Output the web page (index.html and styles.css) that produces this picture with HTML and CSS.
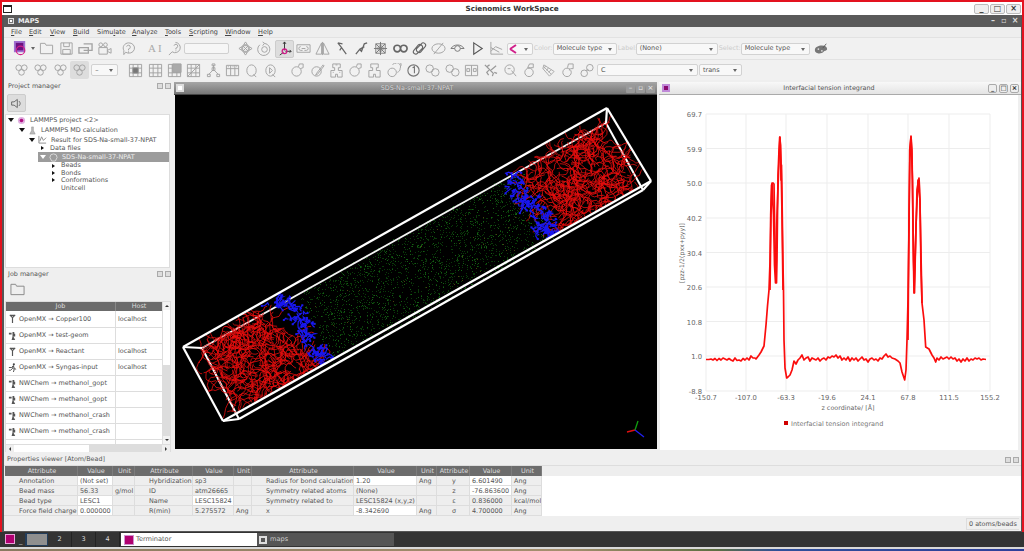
FILE: index.html
```html
<!DOCTYPE html>
<html lang="en">
<head>
<meta charset="utf-8">
<title>Scienomics WorkSpace</title>
<link rel="stylesheet" href="styles.css">
</head>
<body>
<svg class="defs" aria-hidden="true">
  <symbol id="ant" viewBox="0 0 10 10"><path d="M2 1l3 3 3-3M5 3v7M3 1.500h4" fill="none" stroke="#555" stroke-width="1.300"/></symbol>
  <symbol id="stop" viewBox="0 0 10 10"><path d="M1 2h3v2H1zM5 1h2v2H5zM5 3h3v3H6l2 4H4l1-4z" fill="#555"/></symbol>
  <symbol id="run" viewBox="0 0 10 10"><circle cx="6.500" cy="1.500" r="1.200" fill="#444"/><path d="M1 5h3l2-2 1 3 2 1M6 3L5 6l2 1-1 3M5 6L3 8 1 8" fill="none" stroke="#444"/></symbol>
  <symbol id="mol" viewBox="0 0 16 16"><path d="M2 5a3 3 0 1 1 6 0 3 3 0 1 1-6 0zM8 5a3 3 0 1 1 6 0 3 3 0 1 1-6 0zM5 10a3 3 0 1 1 6 0 3 3 0 1 1-6 0z"/></symbol>
  <symbol id="grid" viewBox="0 0 16 16"><path d="M1.500 1.500h13v13h-13zM1.500 5.500h13M1.500 10.500h13M5.500 1.500v13M10.500 1.500v13"/></symbol>
  <symbol id="ring" viewBox="0 0 16 16"><path d="M2 9a5 5 0 1 1 10 0 5 5 0 1 1-10 0zM9 4l1-3h4v4l-3 1"/></symbol>
  <symbol id="rings" viewBox="0 0 16 16"><path d="M1 6a4 4 0 1 1 8 0 4 4 0 1 1-8 0zM7 10a4 4 0 1 1 8 0 4 4 0 1 1-8 0z"/></symbol>
  <symbol id="tree" viewBox="0 0 16 16"><path d="M8 2v5M8 7l-5 5M8 7l5 5M1.500 12h3v2.500h-3zM6.500 5h3v3h-3zM11.500 12h3v2.500h-3zM6.500 1h3v2h-3z"/></symbol>
</svg>
<div class="desktop">
  <header class="wm-title">
    <span class="wm-icon"></span>
    <span class="wm-name">Scienomics WorkSpace</span>
    <span class="wm-btns"><span class="wm-b">_</span><span class="wm-b">□</span><span class="wm-b">×</span></span>
  </header>
  <div class="app">
    <div class="app-head">
      <span class="app-icon"></span><span class="app-name">MAPS</span>
      <span class="app-btns"><span>–</span><span>▫</span><span>×</span></span>
    </div>
    <nav class="menu">
      <span class="m m1"><u>F</u>ile</span><span class="m m2"><u>E</u>dit</span><span class="m m3"><u>V</u>iew</span><span class="m m4"><u>B</u>uild</span><span class="m m5">Simu<u>l</u>ate</span><span class="m m6"><u>A</u>nalyze</span><span class="m m7"><u>T</u>ools</span><span class="m m8"><u>S</u>cripting</span><span class="m m9"><u>W</u>indow</span><span class="m m10"><u>H</u>elp</span>
    </nav>
    <div class="tb tb1">
      <span class="ti"><svg viewBox="0 0 16 16"><rect x="2" y="1" width="10" height="10" fill="#6a1080" stroke="#a070d0" stroke-width="2"/><circle cx="8" cy="10" r="4.500" stroke="#d0208a" stroke-width="1.300"/></svg></span>
      <span class="caret-only"></span>
      <span class="ti"><svg viewBox="0 0 16 16"><path d="M1.500 13.500v-11h5l1 2h7v9z"/></svg></span>
      <span class="ti"><svg viewBox="0 0 16 16"><path d="M2 2h12v12H2zM5 2v4h6V2M4 9h8v5H4z"/></svg></span>
      <span class="ti"><svg viewBox="0 0 16 16"><path d="M6 3h9v7H6M1 7h10v6H1z" stroke-width="1.400"/></svg></span>
      <span class="ti"><svg viewBox="0 0 16 16"><path d="M2 7h9v7H2zM11 10l4-2v5l-4-2M2 4a2 2 0 1 1 4 0 2 2 0 1 1-4 0zM7 4a2 2 0 1 1 4 0 2 2 0 1 1-4 0z"/></svg></span>
      <span class="ti m-sep"><svg viewBox="0 0 16 16"><path d="M8 2a6 5.500 0 1 1-3 10l-2 2.500V10A6 5.500 0 0 1 8 2zM6 6a2 2 0 1 1 2 2.500V10M8 11v1.500"/></svg></span>
      <span class="ti m-sep2 ti-txt">A<span class="cursor">I</span></span>
      <span class="ti"><svg viewBox="0 0 16 16"><path d="M9 1.500a5.500 5.500 0 1 1-3.500 10L2 15M7.500 5a2 2 0 1 1 2 2.500V9M9.500 10v1"/></svg></span>
      <span class="inp"></span>
      <span class="ti m-sep2"><svg viewBox="0 0 16 16"><path d="M8 1l2 3H6zM8 15l-2-3h4zM1 8l3-2v4zM15 8l-3 2V6zM5 5h6v6H5zM5 5l6 6M11 5l-6 6"/></svg></span>
      <span class="ti"><svg viewBox="0 0 16 16"><path d="M3 4a6.500 6.500 0 1 0 5-1.500L6 1M8 2.500L6 5M5 9a3 3 0 1 1 6 0 3 3 0 1 1-6 0z"/></svg></span>
      <span class="ti ti-on"><svg viewBox="0 0 16 16"><path d="M8 10V1M6.500 3L8 1l1.500 2M9 11h6M13.500 9.500L15 11l-1.500 1.500M7 12l-4 3" stroke="#333"/><circle cx="8" cy="11" r="2.500" stroke="#d0208a" stroke-width="1.400"/></svg></span>
      <span class="ti"><svg viewBox="0 0 16 16"><path d="M1 4h14v8H1zM5 6a2 2 0 1 0 0 4h2M11 6a2 2 0 1 1 0 4H9M6 8h4"/></svg></span>
      <span class="ti"><svg viewBox="0 0 16 16"><path d="M7 2L1 14h6zM9 2l6 12H9zM8 1v14"/></svg></span>
      <span class="ti"><svg viewBox="0 0 16 16"><path d="M3 2l4 5-2 3M7 7l5 7M3 2l5 1" stroke="#666" stroke-width="1.300"/></svg></span>
      <span class="ti"><svg viewBox="0 0 16 16"><path d="M2 14l4-5 2 2 3-8 3-1M6 9l5-3" stroke="#666" stroke-width="1.400"/></svg></span>
      <span class="ti"><svg viewBox="0 0 16 16"><path d="M3 3h10v10H3zM8 1v14M1 8h14M3 3l10 10M13 3L3 13M5 8a3 3 0 1 1 6 0 3 3 0 1 1-6 0z" stroke="#777"/></svg></span>
      <span class="ti"><svg viewBox="0 0 16 16"><path d="M1 8a3.500 3.500 0 1 1 7 0 3.500 3.500 0 1 1-7 0zM8 8a3.500 3.500 0 1 1 7 0 3.500 3.500 0 1 1-7 0z" stroke="#666" stroke-width="1.800"/></svg></span>
      <span class="ti"><svg viewBox="0 0 16 16"><path d="M2 10l5-6a3 3 0 0 1 4 4l-5 5a2.500 2.500 0 0 1-4-3zM14 6l-5 6a3 3 0 0 1-4-4l5-5a2.500 2.500 0 0 1 4 3z" stroke="#666" stroke-width="1.200"/></svg></span>
      <span class="ti"><svg viewBox="0 0 16 16"><path d="M1 8a7 5 0 1 1 14 0 7 5 0 1 1-14 0zM3 14L13 2"/></svg></span>
      <span class="ti"><svg viewBox="0 0 16 16"><path d="M1 8h4M11 8h4M5 8a3 3 0 1 1 6 0 3 3 0 1 1-6 0zM1 8c3-5 11-5 14 0" stroke="#777"/></svg></span>
      <span class="ti"><svg viewBox="0 0 16 16"><path d="M4 2l9 6-9 6z" stroke="#555" stroke-width="1.200"/></svg></span>
      <span class="ti"><svg viewBox="0 0 16 16"><path d="M2 1v13h13M2 11l5-5 7 3M2 7l9 5"/></svg></span>
      <span class="cb cb-mol"><svg class="molmini" viewBox="0 0 10 10"><path d="M2 5L8 1M2 5l6 4" stroke="#d0208a" stroke-width="2" fill="none"/></svg></span>
      <span class="lbl l-color">Color:</span><span class="cb cb-a">Molecule type</span>
      <span class="lbl l-label">Label:</span><span class="cb cb-b">(None)</span>
      <span class="lbl l-select">Select:</span><span class="cb cb-c">Molecule type</span>
      <span class="palette"><svg viewBox="0 0 16 12"><path d="M1 7c0-3 4-5 8-5s6 2 6 4-3 2-4 3-3 2-5 2-5-1-5-4z" fill="#777"/><path d="M10 5l4-5" stroke="#555"/><circle cx="5" cy="6" r="1" fill="#ddd"/><circle cx="9" cy="8" r="1" fill="#ddd"/></svg></span>
    </div>
    <div class="tb tb2">
      <span class="ti"><svg><use href="#mol"/></svg></span>
      <span class="ti"><svg><use href="#mol"/></svg></span>
      <span class="ti"><svg><use href="#mol"/></svg></span>
      <span class="ti ti-on2"><svg><use href="#mol"/></svg></span>
      <span class="cb cb-dash">–</span>
      <span class="ti m-sep3"><svg viewBox="0 0 16 16"><path d="M1.500 1.500h13v13h-13zM1.500 5.500h13M1.500 10.500h13M5.500 1.500v13M10.500 1.500v13"/><path d="M5 5h6v6H5z" fill="#777"/></svg></span>
      <span class="ti"><svg><use href="#grid"/></svg></span>
      <span class="ti"><svg viewBox="0 0 16 16"><path d="M1.500 1.500h13v13h-13zM1.500 5.500h13M1.500 10.500h13M5.500 1.500v13M10.500 1.500v13"/><path d="M6 1h9v9H6z" fill="#aaa"/></svg></span>
      <span class="ti"><svg viewBox="0 0 16 16"><path d="M1.500 1.500h13v13h-13zM1.500 5.500h13M1.500 10.500h13M5.500 1.500v13M10.500 1.500v13M1.500 14.500l13-13"/></svg></span>
      <span class="ti"><svg><use href="#tree"/></svg></span>
      <span class="ti"><svg viewBox="0 0 16 16"><path d="M1.500 2.500h13v11h-13zM1.500 6h13M6 2.500v11M10.500 2.500v11M3 4h1M8 4h1M12 4h1"/></svg></span>
      <span class="ti"><svg viewBox="0 0 16 16"><path d="M3 8a5 6 0 1 1 10 0 5 6 0 1 1-10 0zM10 12l3 3"/></svg></span>
      <span class="ti"><svg viewBox="0 0 16 16"><path d="M3 8a5 6 0 1 1 10 0 5 6 0 1 1-10 0zM10 12l3 3M7 5l3 3-3 3z"/></svg></span>
      <span class="ti m-sep4"><svg><use href="#ring"/></svg></span>
      <span class="ti"><svg viewBox="0 0 16 16"><path d="M2 9a5 5 0 1 1 10 0 5 5 0 1 1-10 0zM7 11L14 2l1 1-7 9-2 1z"/></svg></span>
      <span class="ti"><svg viewBox="0 0 16 16"><path d="M4 1h8v4h-2v3h4v7H9v-3H7v3H2V8h4V5H4zM7 2h2M4 10h1M11 10h1"/></svg></span>
      <span class="ti"><svg><use href="#ring"/></svg></span>
      <span class="ti"><svg viewBox="0 0 16 16"><path d="M4 1h8v4h-2v3h4v7H9v-3H7v3H2V8h4V5H4z"/></svg></span>
      <span class="ti"><svg viewBox="0 0 16 16"><path d="M1 10a4.500 4.500 0 1 1 9 0 4.500 4.500 0 1 1-9 0zM6 2a4 4 0 0 1 8 4c0 2-1 3-3 4M9 1a3 3 0 0 1 6 2"/></svg></span>
      <span class="ti"><svg viewBox="0 0 16 16"><path d="M2 8a6 6 0 1 1 12 0 6 6 0 1 1-12 0zM7 5l2-1v7" stroke="#777" stroke-width="1.200"/></svg></span>
      <span class="ti"><svg><use href="#rings"/></svg></span>
      <span class="ti"><svg><use href="#rings"/></svg></span>
      <span class="ti"><svg viewBox="0 0 16 16"><path d="M1.500 2.500h13v11h-13zM8 2.500v11M3 6h3v3H3zM10 6h3v3h-3z"/></svg></span>
      <span class="ti"><svg viewBox="0 0 16 16"><path d="M2 2l5 5-3 3 2 3M14 3L8 8l3 3-1 3M4 4l3-2M12 10l3 1" stroke="#999" stroke-width="1.300"/></svg></span>
      <span class="ti"><svg viewBox="0 0 16 16"><path d="M2 7a5 5 0 1 1 10 0c0 3-2 5-5 5S2 10 2 7zM9 8l5 6M5 6h3"/></svg></span>
      <span class="ti"><svg viewBox="0 0 16 16"><path d="M3 10a4.500 4.500 0 1 1 9 0 4.500 4.500 0 1 1-9 0zM6 5l2-4h4v4h-3z"/></svg></span>
      <span class="ti"><svg viewBox="0 0 16 16"><path d="M3 2l11 7-5 5L2 6zM5 3L3 6M8 5L6 8M11 7L8 10M3 4l8 8" stroke="#aaa"/></svg></span>
      <span class="ti"><svg viewBox="0 0 16 16"><path d="M3 10a4.500 4.500 0 1 1 9 0 4.500 4.500 0 1 1-9 0zM8 5l1-4h5v5h-3M10 8V6"/></svg></span>
      <span class="ti"><svg viewBox="0 0 16 16"><path d="M1 11a3.500 3.500 0 1 1 7 0 3.500 3.500 0 1 1-7 0zM7 5a3.500 3.500 0 1 1 7 0 3.500 3.500 0 1 1-7 0zM6 8l3-1"/></svg></span>
      <span class="cb cb-d">C</span><span class="cb cb-e">trans</span>
    </div>
    <main class="main">
      <aside class="left">
        <div class="dock-head"><span>Project manager</span><span class="dock-btns"><i></i><i></i></span></div>
        <div class="pm-bar"><span class="tool-btn"><svg viewBox="0 0 16 16"><path d="M2 6h3l4-3v10l-4-3H2zM11 5c2 2 2 4 0 6" fill="none" stroke="#555"/></svg></span></div>
        <div class="tree">
          <div class="tr h10 l0"><span class="ar down"></span><span class="tic"><svg viewBox="0 0 10 10"><circle cx="5" cy="5" r="4" fill="#e0b0e0"/><circle cx="5" cy="5" r="2" fill="#b01080"/></svg></span>LAMMPS project &lt;2&gt;</div>
          <div class="tr h10 l1"><span class="ar down"></span><span class="tic"><svg viewBox="0 0 10 10"><path d="M4 1h2v4l2 4H2l2-4z" fill="#bbb" stroke="#888" stroke-width=".5"/></svg></span>LAMMPS MD calculation</div>
          <div class="tr h9 l2"><span class="ar down"></span><span class="tic"><svg viewBox="0 0 10 10"><path d="M1 1v8h8M2 7l2-5 2 4 3-3" fill="none" stroke="#888"/></svg></span>Result for SDS-Na-small-37-NPAT</div>
          <div class="tr h8 l3"><span class="ar right"></span><span class="nog"></span>Data files</div>
          <div class="tr h10 sel"><span class="ar down wh"></span><span class="tic"><svg viewBox="0 0 10 10"><path d="M2 2l3-1 3 1 1 3-2 4H3L1 5z" fill="none" stroke="#ddd"/></svg></span>SDS-Na-small-37-NPAT</div>
          <div class="tr h7 l4"><span class="ar right"></span><span class="nog"></span>Beads</div>
          <div class="tr h75 l4"><span class="ar right"></span><span class="nog"></span>Bonds</div>
          <div class="tr h75 l4"><span class="ar right"></span><span class="nog"></span>Conformations</div>
          <div class="tr h8 l4"><span class="ar none"></span><span class="nog"></span>Unitcell</div>
        </div>
        <div class="dock-head jm"><span>Job manager</span><span class="dock-btns"><i></i><i></i></span></div>
        <div class="jm-bar"><svg viewBox="0 0 16 14"><path d="M1 13V2h5l1 2h8v9z" fill="none" stroke="#888"/></svg></div>
        <div class="jobs">
          <div class="jobs-body">
            <div class="jobs-list">
              <div class="jh"><span class="jc1">Job</span><span class="jc2">Host</span></div>
              <div class="jr"><span class="jc1"><svg><use href="#ant"/></svg>OpenMX → Copper100</span><span class="jc2">localhost</span></div>
              <div class="jr"><span class="jc1"><svg><use href="#stop"/></svg>OpenMX → test-geom</span><span class="jc2"></span></div>
              <div class="jr"><span class="jc1"><svg><use href="#ant"/></svg>OpenMX → Reactant</span><span class="jc2">localhost</span></div>
              <div class="jr"><span class="jc1"><svg><use href="#run"/></svg>OpenMX → Syngas-input</span><span class="jc2">localhost</span></div>
              <div class="jr"><span class="jc1"><svg><use href="#stop"/></svg>NWChem → methanol_gopt</span><span class="jc2"></span></div>
              <div class="jr"><span class="jc1"><svg><use href="#stop"/></svg>NWChem → methanol_gopt</span><span class="jc2"></span></div>
              <div class="jr"><span class="jc1"><svg><use href="#stop"/></svg>NWChem → methanol_crash</span><span class="jc2"></span></div>
              <div class="jr"><span class="jc1"><svg><use href="#stop"/></svg>NWChem → methanol_crash</span><span class="jc2"></span></div>
              <div class="jr jr-cut"><span class="jc1"></span><span class="jc2"></span></div>
            </div>
            <div class="vsb"><span class="sb-up"></span><span class="sb-thumb"></span><span class="sb-track"></span><span class="sb-dn"></span></div>
          </div>
          <div class="hsb"><span class="sb-l"></span><span class="hthumb"></span><span class="htrack"></span><span class="sb-r"></span></div>
        </div>
      </aside>
      <section class="view">
        <div class="view-head">
          <span class="view-icon"></span><span class="view-title">SDS-Na-small-37-NPAT</span>
          <span class="view-btns"><span>–</span><span>▫</span><span>×</span></span>
        </div>
        <canvas id="scene" width="482" height="354"></canvas>
      </section>
      <section class="plot">
        <div class="plot-head">
          <span class="plot-icon"></span><span class="plot-title">Interfacial tension integrand</span>
          <span class="plot-btns"><span>_</span><span>□</span><span>×</span></span>
        </div>
        <svg class="chart" viewBox="661 95 358 355">
          <g class="gridl">
            <path d="M707 114H991M707 148.500H991M707 183H991M707 218H991M707 252.500H991M707 287H991M707 321.500H991M707 356H991M707 391H991"/>
            <path d="M707 114V391M747 114V391M787 114V391M828 114V391M869 114V391M909 114V391M950 114V391M991 114V391"/>
          </g>
          <g class="ylab">
            <text x="703" y="117">69.7</text><text x="703" y="151.500">59.9</text><text x="703" y="186">50.0</text><text x="703" y="221">40.2</text><text x="703" y="255.500">30.4</text><text x="703" y="290">20.6</text><text x="703" y="324.500">10.8</text><text x="703" y="359">1.0</text><text x="703" y="394">-8.8</text>
          </g>
          <g class="xlab">
            <text x="707" y="400">-150.7</text><text x="747" y="400">-107.0</text><text x="787" y="400">-63.3</text><text x="828" y="400">-19.6</text><text x="869" y="400">24.1</text><text x="909" y="400">67.8</text><text x="950" y="400">111.5</text><text x="991" y="400">155.2</text>
            <text class="xt" x="849" y="410">z coordinate/ [Å]</text>
          </g>
          <text class="ytitle" transform="translate(685 253) rotate(-90)">[pzz-1/2(pxx+pyy)]</text>
          <polyline class="curve" points="707,359.500 710,359.500 712,359 714,360 716,358.500 718,360.500 720,358.500 722,360 724,358 726,359 728,360 730,358.500 732,360 734,361 736,358 738,360.500 740,360 742,361 744,358.500 746,360 748,358 750,360 752,356 754,358 756,358 757,359 760,355 762,352 765,346 767,325 768.500,306 770,290 771,262 771.700,215 772.500,185 774,183 775,184 775.500,215 776.500,265 777.500,283 778,260 778.500,215 779,175 780,150 780.700,137 781.500,145 782,180 782.500,165 783,195 784,265 784.500,290 785,340 786,368 787.700,378 789,377 791,375 793,370 795,361 797,364 799,360 801,358 803,355 805,360 807,358 809,357 811,361 813,358 815,359 817,360 819,358 821,361 823,359 825,358 827,360 829,357 831,358 833,356 835,357 837,355 839,358 841,356 843,360 845,358 847,360 849,357 851,361 853,358 855,360 857,358 859,361 861,359 863,357 865,360 867,359 869,362 871,359 873,358 875,360 877,359 879,361 881,358 883,359 885,356 887,354 889,357 891,356 893,358 896,359 899,361 901,363 903,372 905.700,380 907,370 908,340 909,300 910,230 910.700,150 912,136 913,150 914,230 915,293 916,262 916.700,240 918,190 920,178 920.700,190 921.700,240 923,303 925,320 926.700,347 930,349 933,355 935,358 936.700,362 938,358 940,360 942,357 944,359 946,358 948,357 950,359 952,357 954,359 956,358 958,361 960,359 962,362 964,359 966,361 968,358 970,361 972,359 974,360 976,358 978,359 980,358 982,360 984,359 987,359.500"/>
          <polyline class="curve" points="771,290 772,215 773,183 774.500,215 775.500,265 776.500,283 778,215 780,160 781,137 782,160 783,215 784,290"/>
          <polyline class="curve" points="909,340 910,215 911,150 912,137 913.500,180 914.500,260 915.500,293 917,225 919,180 921,200 922,270 923,303"/>
          <rect class="leg" x="785" y="421" width="4" height="4"/>
          <text class="legt" x="792" y="425.500">Interfacial tension integrand</text>
        </svg>
      </section>
    </main>
    <div class="props">
      <div class="dock-head pv"><span>Properties viewer [Atom/Bead]</span><span class="dock-btns"><i></i><i></i></span></div>
      <div class="ptable">
        <span class="h">Attribute</span><span class="h">Value</span><span class="h">Unit</span><span class="h">Attribute</span><span class="h">Value</span><span class="h">Unit</span><span class="h">Attribute</span><span class="h">Value</span><span class="h">Unit</span><span class="h">Attribute</span><span class="h">Value</span><span class="h">Unit</span><span class="hf"></span>

        <span class="c ind">Annotation</span><span class="c w">(Not set)</span><span class="c"></span><span class="c ind">Hybridization</span><span class="c">sp3</span><span class="c"></span><span class="c ind">Radius for bond calculation</span><span class="c w">1.20</span><span class="c">Ang</span><span class="c ctr">y</span><span class="c w">6.601490</span><span class="c">Ang</span><span class="f"></span>

        <span class="c ind">Bead mass</span><span class="c">56.33</span><span class="c">g/mol</span><span class="c ind">ID</span><span class="c">atm26665</span><span class="c"></span><span class="c ind">Symmetry related atoms</span><span class="c">(None)</span><span class="c"></span><span class="c ctr">z</span><span class="c w">-76.863600</span><span class="c">Ang</span><span class="f"></span>

        <span class="c ind">Bead type</span><span class="c w">LESC1</span><span class="c"></span><span class="c ind">Name</span><span class="c w">LESC15824</span><span class="c"></span><span class="c ind">Symmetry related to</span><span class="c">LESC15824 (x,y,z)</span><span class="c"></span><span class="c ctr">ε</span><span class="c">0.836000</span><span class="c">kcal/mol</span><span class="f"></span>

        <span class="c ind">Force field charge</span><span class="c w">0.000000</span><span class="c"></span><span class="c ind">R(min)</span><span class="c">5.275572</span><span class="c">Ang</span><span class="c ind">x</span><span class="c w">-8.342690</span><span class="c">Ang</span><span class="c ctr">σ</span><span class="c">4.700000</span><span class="c">Ang</span><span class="f"></span>
      </div>
    </div>
    <footer class="status"><span class="status-box">0 atoms/beads</span></footer>
  </div>
  <div class="taskbar">
    <span class="tk-icon"></span><span class="tk-min">_</span>
    <span class="ws ws-on"></span><span class="ws">2</span><span class="ws">3</span><span class="ws">4</span>
    <span class="task task-on"><span class="task-pink"></span>Terminator</span>
    <span class="task task-off"><span class="task-white"></span>maps</span>
  </div>
  <div class="strip"></div>
</div>
<script src="script.js"></script>
</body>
</html>
```
FILE: styles.css
```css
* { box-sizing: border-box; }
html, body { margin: 0; padding: 0; }
body { width: 1024px; height: 551px; overflow: hidden; font: 6.5px/1 "DejaVu Sans", sans-serif; color: #555; background: #333; }
.defs { display: block; width: 0; height: 0; overflow: hidden; }
.desktop { width: 1024px; height: 551px; display: flex; flex-direction: column; }

.wm-title { flex: 0 0 15px; display: flex; align-items: center; background: linear-gradient(#e3121f 2px, #fff 2px); padding: 2px 2px 0 2px; box-shadow: inset 2px 0 #e3121f, inset -2px 0 #e3121f; }
.wm-icon { width: 9px; height: 8px; margin-left: 1px; border: 1px solid #222; border-top-width: 2px; background: #fff; }
.wm-name { flex: 1; text-align: center; font-weight: bold; font-size: 7.2px; color: #333; padding-left: 38px; }
.wm-btns { display: flex; gap: 1px; padding-right: 1px; }
.wm-b { width: 15px; height: 10px; border: 1px solid #bbb; border-radius: 2px; background: #eee; color: #333; font-size: 8px; line-height: 8px; text-align: center; font-weight: bold; }

.app { flex: 0 0 517px; display: flex; flex-direction: column; background: #efefef; border-left: 2px solid #555; border-right: 1px solid #555; border-bottom: 1px solid #555; box-shadow: -2px 0 #e3121f, 2px 0 #e3121f; margin: 0 2px; }
.app-head { flex: 0 0 12px; background: #5a5a5a; display: flex; align-items: center; color: #eee; font-weight: bold; font-size: 6.6px; padding-left: 4px; }
.app-icon { width: 6px; height: 6px; border: 1px solid #ddd; margin-right: 4px; background: radial-gradient(#fff 30%, #777 40%); }
.app-name { flex: 1; }
.app-btns { display: flex; gap: 3px; padding-right: 2px; color: #ddd; }
.app-btns span { width: 8px; text-align: center; font-size: 8px; }

.menu { flex: 0 0 10px; position: relative; background: #eee; }
.menu .m { position: absolute; top: 2px; font-size: 6.5px; color: #444; }
.m1 { left: 7px; } .m2 { left: 25px; } .m3 { left: 46px; } .m4 { left: 69px; } .m5 { left: 93px; }
.m6 { left: 128px; } .m7 { left: 161px; } .m8 { left: 185px; } .m9 { left: 221px; } .m10 { left: 254px; }

.tb { display: flex; align-items: center; background: #f1f1f1; border-top: 1px solid #e2e2e2; }
.tb1 { flex: 0 0 22px; padding-left: 6.4px; }
.tb2 { flex: 0 0 21px; padding-left: 8px; }
.ti { flex: 0 0 19.3px; height: 18px; display: flex; align-items: center; justify-content: center; }
.ti svg { width: 15px; height: 15px; fill: none; stroke: #a2a2a2; stroke-width: 1; }
.ti-on { background: #ddd; border: 1px solid #ccc; border-radius: 2px; }
.ti-on2 { background: #ddd; border-radius: 2px; }
.ti-txt { font-size: 11px; color: #aaa; font-family: "Liberation Serif", serif; }
.cursor { font-weight: normal; margin-left: 2px; }
.caret-only { flex: 0 0 7.6px; display: flex; justify-content: center; }
.caret-only::after { content: ""; border: 2px solid transparent; border-top: 3px solid #666; margin-top: 2px; }
.m-sep { margin-left: 4px; }
.m-sep2 { margin-left: 7.35px; }
.m-sep3 { margin-left: 8px; }
.m-sep4 { margin-left: 7.6px; }
.inp { flex: 0 0 45px; height: 11px; background: #f6f6f6; border: 1px solid #d0d0d0; border-radius: 2px; }
.cb { height: 12px; display: flex; align-items: center; background: #f8f8f8; border: 1px solid #d2d2d2; border-radius: 2px; font-size: 6.5px; color: #555; padding-left: 3px; position: relative; flex-shrink: 0; }
.cb::after { content: ""; position: absolute; right: 4px; top: 4px; border: 2px solid transparent; border-top: 3px solid #666; }
.cb-mol { width: 26px; margin-left: .5px; }
.molmini { width: 10px; height: 10px; margin-left: -3px; }
.lbl { color: #ccc; font-size: 6.4px; flex-shrink: 0; }
.l-color { width: 19px; margin-left: 1px; }
.cb-a { width: 64px; }
.l-label { width: 18px; margin-left: 1px; }
.cb-b { width: 82px; }
.l-select { width: 22px; margin-left: 1px; }
.cb-c { width: 69px; }
.palette { width: 14px; height: 12px; margin-left: 4px; display: flex; }
.palette svg { width: 14px; height: 12px; }
.cb-dash { width: 27px; margin-left: 2px; }
.cb-d { width: 101px; }
.cb-e { width: 43px; margin-left: 1px; }

.main { flex: 0 0 372px; display: flex; padding-left: 1px; background: #efefef; overflow: hidden; }
.left { flex: 0 0 168px; display: flex; flex-direction: column; }
.dock-head { flex: 0 0 12px; display: flex; align-items: center; justify-content: space-between; padding: 0 2px 0 3px; font-size: 6.4px; color: #555; }
.dock-btns { display: flex; gap: 2px; }
.dock-btns i { width: 6px; height: 6px; border: 1px solid #aaa; background: #ddd; display: block; }
.pm-bar { flex: 0 0 22px; padding: 2px 0 0 2px; }
.tool-btn { display: flex; width: 19px; height: 18px; background: #ddd; border: 1px solid #ccc; border-radius: 2px; align-items: center; justify-content: center; }
.tool-btn svg { width: 13px; height: 13px; }
.tree { flex: 0 0 154px; width: 165px; background: #fff; border: 1px solid #ddd; color: #555; }
.tr { display: flex; align-items: center; font-size: 6.45px; white-space: nowrap; }
.h10 { height: 10px; } .h9 { height: 9.5px; } .h8 { height: 7.5px; } .h7 { height: 7px; } .h75 { height: 7.5px; }
.l0 { padding-left: 1px; } .l1 { padding-left: 12px; } .l2 { padding-left: 22px; } .l3 { padding-left: 32px; } .l4 { padding-left: 43px; }
.sel { margin-left: 32px; padding-left: 1px; background: #9c9c9c; color: #eee; }
.ar { flex: 0 0 8px; height: 6px; display: flex; align-items: center; justify-content: center; }
.ar.down::after { content: ""; border: 3px solid transparent; border-top: 4px solid #111; border-bottom: 0; }
.ar.right::after { content: ""; border: 2.5px solid transparent; border-left: 3.5px solid #111; border-right: 0; }
.ar.down.wh::after { border-top-color: #fff; }
.tic { flex: 0 0 15px; display: flex; justify-content: flex-start; padding-left: 2px; }
.tic svg { width: 9px; height: 9px; }
.nog { flex: 0 0 4px; }
.jm-bar { flex: 0 0 21px; padding: 2px 0 0 5px; }
.jm-bar svg { width: 15px; height: 14px; display: block; }
.jobs { flex: 0 0 151px; width: 166px; display: flex; flex-direction: column; background: #fff; border: 1px solid #ddd; border-bottom: 0; }
.jobs-body { flex: 0 0 142px; display: flex; overflow: hidden; }
.jobs-list { flex: 1; overflow: hidden; }
.jh { height: 9px; display: flex; background: #6b6b6b; color: #ddd; text-align: center; font-size: 6.45px; line-height: 9px; }
.jh .jc1 { flex: 0 0 110px; border-right: 1px solid #888; }
.jh .jc2 { flex: 1; }
.jr { height: 16px; display: flex; border-bottom: 1px solid #ddd; align-items: center; font-size: 6.45px; color: #555; }
.jr .jc1 { flex: 0 0 110px; display: flex; align-items: center; height: 100%; border-right: 1px solid #ddd; padding-left: 2px; white-space: nowrap; gap: 2px; }
.jr .jc1 svg { width: 9px; height: 9px; flex-shrink: 0; }
.jr .jc2 { flex: 1; padding-left: 2px; }
.jr:nth-child(2) { height: 16.5px; }
.vsb { flex: 0 0 8px; display: flex; flex-direction: column; background: #f2f2f2; border-left: 1px solid #ddd; }
.sb-up { flex: 0 0 8px; display: flex; justify-content: center; align-items: center; }
.sb-up::after { content: ""; border: 2px solid transparent; border-bottom: 2px solid #333; border-top: 0; }
.sb-thumb { flex: 0 0 55px; background: #fff; }
.sb-track { flex: 1; background: #ddd; }
.sb-dn { flex: 0 0 8px; display: flex; justify-content: center; align-items: center; background: #f2f2f2; }
.sb-dn::after { content: ""; border: 2px solid transparent; border-top: 2px solid #333; border-bottom: 0; }
.hsb { flex: 0 0 8px; display: flex; background: #eee; border-top: 1px solid #ddd; }
.sb-l { flex: 0 0 8px; display: flex; justify-content: center; align-items: center; }
.sb-l::after { content: ""; border: 2px solid transparent; border-right: 2px solid #333; border-left: 0; }
.hthumb { flex: 0 0 75px; background: #fff; }
.htrack { flex: 1; background: #ddd; }
.sb-r { flex: 0 0 8px; display: flex; justify-content: center; align-items: center; }
.sb-r::after { content: ""; border: 2px solid transparent; border-left: 2px solid #333; border-right: 0; }

.view { flex: 0 0 486px; padding-top: 2px; display: flex; flex-direction: column; }
.view-head { flex: 0 0 13px; margin-left: 1px; margin-right: 2px; display: flex; align-items: center; background: linear-gradient(#a6a6a6, #777); padding-left: 2px; border-bottom: 1px solid #444; }
.view-icon { width: 8px; height: 8px; border: 2px solid #ddd; background: #fff; }
.view-title { flex: 1; text-align: center; color: #d8d8d8; font-size: 6.45px; text-shadow: 0 0 1px #666; padding-left: 24px; }
.view-btns { display: flex; gap: 1px; padding-right: 2px; }
.view-btns span { width: 9px; height: 9px; background: #9a9a9a; color: #eee; border-radius: 1px; font-size: 7px; line-height: 8px; text-align: center; }
#scene { display: block; margin-left: 2px; width: 482px; height: 354px; }

.plot { flex: 0 0 362px; padding-top: 2px; display: flex; flex-direction: column; background: #efefef; }
.plot-head { flex: 0 0 13px; display: flex; align-items: center; background: linear-gradient(#f8f8f8, #e4e4e4); padding-left: 3px; border-bottom: 1px solid #aaa; }
.plot-icon { width: 8px; height: 8px; border: 2px solid #c08ad8; background: #8a0a70; }
.plot-title { flex: 1; text-align: center; font-size: 6.45px; color: #555; }
.plot-btns { display: flex; gap: 2px; padding-right: 2px; }
.plot-btns span { width: 9px; height: 9px; border: 1px solid #aaa; border-radius: 2px; background: #eee; font-size: 6.5px; line-height: 6px; text-align: center; color: #222; font-weight: bold; }
.chart { width: 358px; height: 355px; margin-left: 1px; background: #fff; display: block; }
.gridl path { fill: none; stroke: #ededed; stroke-width: 1; }
.ylab text { font-size: 6.8px; fill: #666; text-anchor: end; }
.xlab text { font-size: 6.8px; fill: #666; text-anchor: middle; }
.xlab .xt { font-size: 6.4px; }
.ytitle { font-size: 6.2px; fill: #666; text-anchor: middle; }
.curve { fill: none; stroke: #fb0d0d; stroke-width: 1.700; stroke-linejoin: round; }
.leg { fill: #d00000; }
.legt { font-size: 6.5px; fill: #777; }

.props { flex: 0 0 65px; display: flex; flex-direction: column; background: #efefef; }
.pv { flex: 0 0 14px; padding-top: 2px; border-bottom: 1px solid #ddd; }
.ptable { display: grid; grid-template-columns: 73px 35px 22px 58px 41px 18px 102px 63px 20px 33px 42px 30px 1fr; grid-auto-rows: 10px; padding-left: 1px; font-size: 6.45px; color: #555; height: 50px; border-bottom: 1px solid #ddd; }
.ptable span { line-height: 10px; white-space: nowrap; overflow: hidden; padding-left: 2px; }
.h { background: #6c6c6c; color: #ddd; text-align: center; border-right: 1px solid #7c7c7c; }
.hf { background: #eee; }
.c { background: #eee; border-right: 1px solid #ddd; border-bottom: 1px solid #ddd; }
.w { background: #fff; }
.f { background: #fff; }
.ptable .ind { padding-left: 14px; }
.ptable .ctr { text-align: center; }

.status { flex: 0 0 14px; display: flex; justify-content: flex-end; align-items: center; background: #efefef; padding-right: 2px; }
.status-box { border: 1px solid #ddd; border-right: 0; height: 12px; width: 53px; font-size: 6.45px; line-height: 11px; padding-left: 2px; color: #555; white-space: nowrap; }

.taskbar { flex: 0 0 15px; display: flex; align-items: stretch; background: #333; margin: 0 2px; padding-left: 2px; color: #ddd; font-size: 6.5px; }
.tk-icon { width: 10px; height: 10px; margin: 2px 0 0 1px; border: 1px solid #e8a0d8; background: #b00070; }
.tk-min { width: 10px; padding: 6px 0 0 4px; font-size: 7px; color: #bbb; }
.ws { width: 24px; display: flex; align-items: center; justify-content: center; border-right: 1px solid #222; }
.ws-on { background: #8f8f8f; border: 1px solid #223c5a; border-left-width: 2px; width: 23px; margin: 1px 0; }
.task { width: 137px; display: flex; align-items: center; margin: 1px 0; padding-left: 2px; font-size: 6.6px; }
.task-on { background: #fff; color: #555; margin-left: 1px; width: 136px; }
.task-off { background: #555; color: #ccc; }
.task-pink { width: 10px; height: 10px; border: 1px solid #d090d0; background: #b00070; margin-right: 2px; margin-left: 1px; }
.task-white { width: 8px; height: 8px; border: 2px solid #ddd; background: #555; margin-right: 3px; }
.strip { flex: 0 0 4px; background: linear-gradient(#d8d8d8 2px, transparent 2px), linear-gradient(90deg, #8a7a60 0, #a58f6e 55%, #5d6f42 70%, #2f4f9a 76%, #2f3f9a 100%); }
```
FILE: script.js
```js
(function () {
  var canvas = document.getElementById('scene');
  var ctx = canvas.getContext('2d');
  var seed = 12345;
  function rnd() { seed = (seed * 1664525 + 1013904223) >>> 0; return seed / 4294967296; }
  ctx.fillStyle = '#000';
  ctx.fillRect(0, 0, 482, 354);
  ctx.translate(-176, -95);

  var A = [184, 347], B = [224, 421], C = [240, 419], D = [203, 348];
  var E = [608, 108], F = [652, 181], G = [607, 123], H = [644, 190];

  function line(p, q, w, color) {
    ctx.beginPath(); ctx.moveTo(p[0], p[1]); ctx.lineTo(q[0], q[1]);
    ctx.lineWidth = w; ctx.strokeStyle = color; ctx.stroke();
  }
  function quad(q, s, t) {
    var ax = q[0][0] + (q[1][0] - q[0][0]) * s, ay = q[0][1] + (q[1][1] - q[0][1]) * s;
    var bx = q[3][0] + (q[2][0] - q[3][0]) * s, by = q[3][1] + (q[2][1] - q[3][1]) * s;
    return [ax + (bx - ax) * t, ay + (by - ay) * t];
  }

  // Solvent: sparse, dim green dots in the middle slab
  var mid = [[298, 293], [522, 168], [556, 238], [334, 363]];
  for (var i = 0; i < 2600; i++) {
    var p = quad(mid, rnd(), rnd());
    var r = rnd();
    ctx.fillStyle = r < 0.012 ? '#4a4010' : r < 0.2 ? '#146014' : '#0a3a0a';
    ctx.fillRect(Math.round(p[0]), Math.round(p[1]), 1, 1);
  }

  // Back edges: drawn before the tails so the molecules break them up
  line(D, C, 2, '#fff'); line(G, H, 2, '#fff'); line(D, G, 2, '#f4f4f4');

  // Everything molecular stays inside the cell outline
  ctx.save();
  ctx.beginPath();
  ctx.moveTo(A[0], A[1]); ctx.lineTo(E[0], E[1]); ctx.lineTo(F[0], F[1]); ctx.lineTo(B[0], B[1]);
  ctx.closePath(); ctx.clip();

  // Tails: tangled red chains in both end slabs
  function chains(q, count, segs, color, step, width) {
    ctx.strokeStyle = color; ctx.lineWidth = width;
    for (var n = 0; n < count; n++) {
      var s = rnd(), t = rnd();
      var pt = quad(q, s, t);
      var a = rnd() * 6.283;
      ctx.beginPath(); ctx.moveTo(pt[0], pt[1]);
      for (var k = 0; k < segs; k++) {
        a += (rnd() - 0.5) * 1.9;
        var l = step * (0.5 + rnd());
        pt = [pt[0] + Math.cos(a) * l, pt[1] + Math.sin(a) * l];
        ctx.lineTo(pt[0], pt[1]);
      }
      ctx.stroke();
    }
  }
  var redL = [[200, 350], [268, 310], [322, 368], [238, 412]];
  var redR = [[524, 176], [600, 128], [640, 184], [562, 232]];
  chains(redL, 260, 8, '#e80f0f', 3.500, 0.8);
  chains(redR, 260, 8, '#e80f0f', 3.500, 0.8);
  chains([[232, 414], [300, 374], [308, 380], [240, 420]], 10, 4, '#c80c0c', 4, 0.9);
  chains([[560, 244], [620, 200], [626, 204], [566, 250]], 10, 4, '#c80c0c', 4, 0.9);

  // Head groups: blue clusters along the two interfaces
  function band(path, halfWidth, count) {
    ctx.strokeStyle = '#1a18f0'; ctx.fillStyle = '#1a18f0'; ctx.lineWidth = 1.200;
    for (var n = 0; n < count; n++) {
      var f = rnd() * (path.length - 1), j = Math.floor(f), u = f - j;
      var x = path[j][0] + (path[j + 1][0] - path[j][0]) * u + (rnd() - 0.5) * 2 * halfWidth;
      var y = path[j][1] + (path[j + 1][1] - path[j][1]) * u + (rnd() - 0.5) * 2 * halfWidth * 0.6;
      ctx.beginPath(); ctx.moveTo(x, y);
      for (var k = 0; k < 3; k++) {
        x += (rnd() - 0.5) * 7; y += (rnd() - 0.5) * 7;
        ctx.lineTo(x, y);
      }
      ctx.stroke();
      ctx.fillRect(x - 1, y - 1, 2, 2);
    }
  }
  band([[276, 302], [290, 303], [305, 327], [322, 357], [330, 368]], 10, 100);
  band([[510, 176], [530, 203], [545, 225], [558, 240]], 10, 110);
  ctx.restore();

  // Front edges of the simulation cell
  line(A, E, 2.200, '#fff'); line(A, B, 2.200, '#fff'); line(A, D, 2.200, '#fff');
  line(B, F, 2.200, '#fff'); line(B, C, 2.200, '#fff'); line(C, H, 2.200, '#fff');
  line(E, F, 2.200, '#fff'); line(E, G, 2.200, '#fff'); line(F, H, 2.200, '#fff');

  // Orientation axes in the lower right
  line([636, 430], [628, 432], 1.300, '#e01010');
  line([636, 430], [639, 421], 1.300, '#10a010');
  line([636, 430], [645, 437], 1.300, '#2020f0');
})();
```
